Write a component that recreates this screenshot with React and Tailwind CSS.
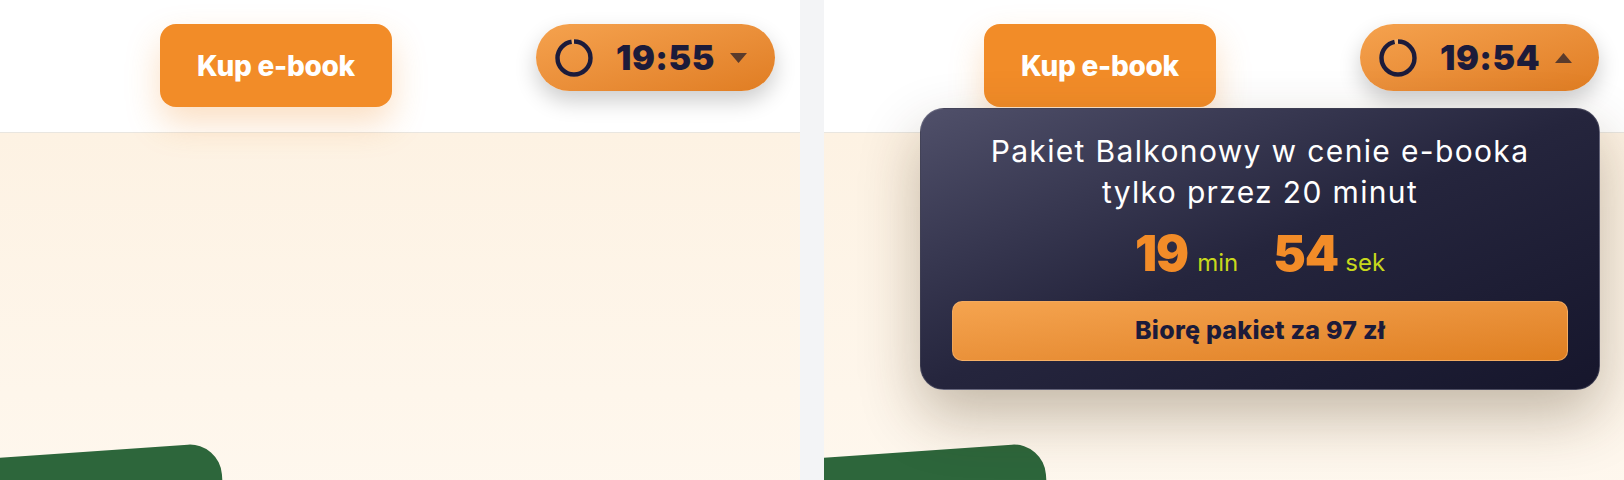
import { useState } from 'react'

const font = "font-['Inter','Liberation_Sans',sans-serif]"

function Ring({ gap }) {
  const r = 16.5
  const c = 2 * Math.PI * r
  return (
    <svg width="38" height="38" viewBox="0 0 38 38" className="shrink-0">
      <circle cx="19" cy="19" r={r} fill="none" stroke="#f6b06a" strokeWidth="4.5" />
      <circle
        cx="19"
        cy="19"
        r={r}
        fill="none"
        stroke="#1c1b3a"
        strokeWidth="4.5"
        strokeDasharray={`${c * (1 - gap)} ${c}`}
        transform="rotate(-90 19 19)"
      />
    </svg>
  )
}

function Caret({ up }) {
  return (
    <svg width="17" height="10" viewBox="0 0 17 10" className="ml-[15px] shrink-0">
      {up ? (
        <path d="M8.5 0 L17 10 L0 10 Z" fill="#5a3b2c" />
      ) : (
        <path d="M0 0 L17 0 L8.5 10 Z" fill="#5a3b2c" />
      )}
    </svg>
  )
}

function Timer({ left, open, gap }) {
  const m = Math.floor(left / 60)
  const s = String(left % 60).padStart(2, '0')
  return (
    <div className="relative">
      <button className="flex items-center h-[67px] w-[239px] pl-[19px] rounded-full bg-linear-to-br from-[#f5a24e] to-[#e07d22] shadow-[0_10px_22px_rgba(0,0,0,0.2)]">
        <Ring gap={gap} />
        <span className="ml-[23px] text-left text-[34px] font-black tracking-[0.015em] leading-none text-[#1c1b3a]">
          {m}:{s}
        </span>
        <Caret up={open} />
      </button>

      {open && (
        <div className="absolute right-[-1px] top-[84px] w-[680px] rounded-[24px] border border-white/15 bg-linear-to-br from-[#50506a] via-[#25253d] to-[#16162c] px-[31px] pt-[22px] pb-[28px] text-center shadow-[0_26px_60px_rgba(60,40,10,0.3)]">
          <p className="text-[30px] leading-[41px] text-white tracking-[0.045em]">
            Pakiet Balkonowy w cenie e-booka
            <br />
            tylko przez 20 minut
          </p>
          <div className="mt-[16px] flex items-baseline justify-center">
            <span className="text-[49px] font-black leading-none text-[#f28c28] tracking-[-0.02em]">{m}</span>
            <span className="ml-[9px] text-[24px] leading-none text-[#c8d81c]">min</span>
            <span className="ml-[35px] text-[49px] font-black leading-none text-[#f28c28] tracking-[-0.02em]">{s}</span>
            <span className="ml-[7px] text-[24px] leading-none text-[#c8d81c]">sek</span>
          </div>
          <button className="mt-[23px] w-full h-[60px] rounded-[10px] border border-[#f8bb78]/60 bg-linear-to-br from-[#f5a44f] to-[#df7f20] text-[25px] font-extrabold tracking-[0.01em] text-[#1c1b3a]">
            Biorę pakiet za 97 zł
          </button>
        </div>
      )}
    </div>
  )
}

function Panel({ left, open, gap }) {
  return (
    <div className={`relative w-[800px] h-[480px] overflow-hidden flex flex-col ${font}`}>
      <header className="relative z-10 h-[133px] shrink-0 flex items-start justify-between pt-[24px] pl-[160px] pr-[25px] bg-white border-b border-[#e9e6e0]">
        <button className="w-[232px] h-[83px] rounded-[16px] bg-[#f28c28] text-white text-[28px] font-extrabold tracking-[-0.01em] shadow-[0_16px_34px_rgba(242,140,40,0.28)]">
          Kup e-book
        </button>
        <Timer left={left} open={open} gap={gap} />
      </header>
      <main className="flex-1 bg-linear-to-b from-[#fdf2e3] to-[#fffaf3]">
        <div className="mt-[319px] -ml-[55px] w-[282px] h-[200px] rounded-[32px] bg-[#2d663b] rotate-[-4deg]" />
      </main>
    </div>
  )
}

export default function App() {
  const [panels] = useState([
    { left: 1195, open: false, gap: 0.03 },
    { left: 1194, open: true, gap: 0.04 },
  ])
  return (
    <div className="flex gap-[24px] w-[1624px] h-[480px] bg-[#f3f4f6]">
      {panels.map((p, i) => (
        <Panel key={i} {...p} />
      ))}
    </div>
  )
}
